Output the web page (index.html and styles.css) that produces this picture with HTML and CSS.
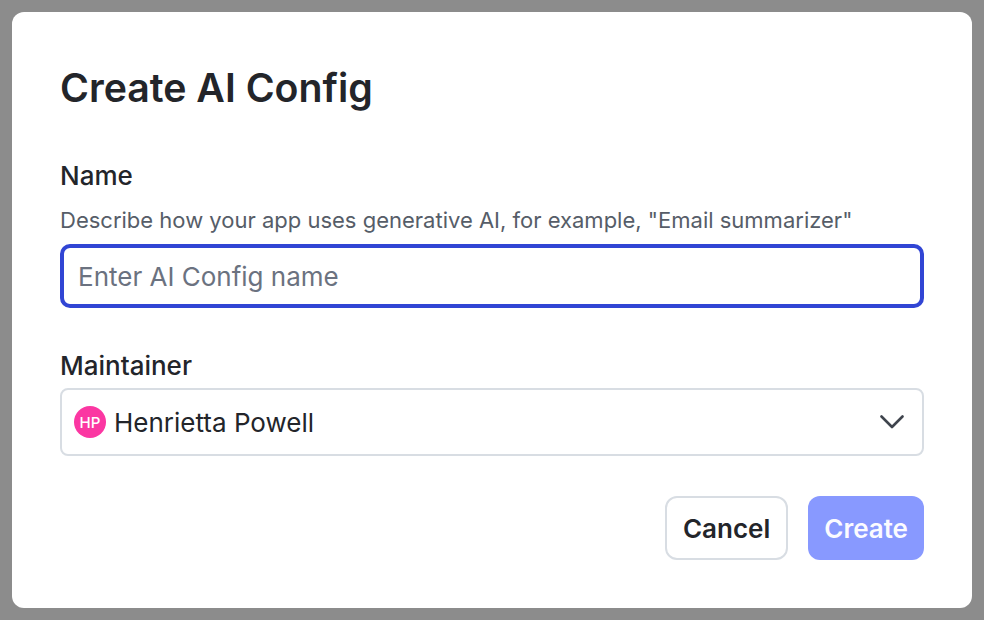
FILE: index.html
```html
<!DOCTYPE html>
<html lang="en">

<head>
    <meta charset="UTF-8">
    <title>Create AI Config</title>
    <link rel="stylesheet" href="styles.css">
</head>

<body>
    <!-- Modal -->
    <div class="modal">
        <h1>Create AI Config</h1>

        <form class="modal-form">
            <div class="field">
                <label for="name">Name</label>
                <p class="hint">Describe how your app uses generative AI, for example, "Email summarizer"</p>
                <input type="text" id="name" placeholder="Enter AI Config name">
            </div>

            <div class="field maintainer">
                <label>Maintainer</label>
                <div class="select">
                    <span class="avatar">HP</span>
                    <span class="select-value">Henrietta Powell</span>
                    <svg class="chevron" width="24" height="14" viewBox="0 0 24 14" fill="none">
                        <path d="M1.5 1.5L12 12L22.5 1.5" stroke="#3f444d" stroke-width="2.6" stroke-linecap="round" stroke-linejoin="round" />
                    </svg>
                </div>
            </div>

            <div class="buttons">
                <button type="button" class="btn btn-cancel">Cancel</button>
                <button type="button" class="btn btn-create">Create</button>
            </div>
        </form>
    </div>
</body>

</html>
```

FILE: styles.css
```css
body, html {
    height: 100%;
    margin: 0;
    font-family: Inter, "Liberation Sans", sans-serif;
    background-color: #8c8c8c;
}

body {
    box-sizing: border-box;
    padding: 12px;
}

/* Modal */
.modal {
    box-sizing: border-box;
    height: 596px;
    background-color: #ffffff;
    border-radius: 12px;
    padding: 52px 48px 48px 48px;
    color: #23252a;
}

.modal h1 {
    margin: 0;
    font-size: 39.25px;
    line-height: 48px;
    font-weight: 600;
}

.modal-form {
    margin-top: 48px;
}

.field label {
    display: block;
    font-size: 26px;
    line-height: 32px;
    font-weight: 500;
}

.hint {
    margin: 16px 0 12px;
    font-size: 22px;
    line-height: 24px;
    color: #565d68;
}

.field input {
    box-sizing: border-box;
    display: block;
    width: 100%;
    height: 64px;
    padding: 0 14px;
    border: 4px solid #3145d4;
    border-radius: 10px;
    outline: none;
    font-family: inherit;
    font-size: 26px;
}

.field input::placeholder {
    color: #6b7280;
}

.maintainer {
    margin-top: 42px;
}

.select {
    box-sizing: border-box;
    display: flex;
    align-items: center;
    height: 68px;
    margin-top: 6px;
    padding: 0 18px 0 12px;
    border: 2px solid #d8dde3;
    border-radius: 8px;
}

.avatar {
    display: flex;
    align-items: center;
    justify-content: center;
    width: 32px;
    height: 32px;
    border-radius: 50%;
    background-color: #fb37a2;
    color: #ffffff;
    font-size: 15px;
    font-weight: 500;
}

.select-value {
    flex: 1;
    margin-left: 8px;
    font-size: 26px;
}

.buttons {
    display: flex;
    justify-content: flex-end;
    gap: 20px;
    margin-top: 40px;
}

.btn {
    box-sizing: border-box;
    height: 64px;
    padding: 0 16px;
    border-radius: 12px;
    font-family: inherit;
    font-size: 26px;
    font-weight: 600;
}

.btn-cancel {
    background-color: #ffffff;
    border: 2px solid #d8dde3;
    color: #23252a;
}

.btn-create {
    background-color: #8899ff;
    border: none;
    color: #fbfbff;
}
```
